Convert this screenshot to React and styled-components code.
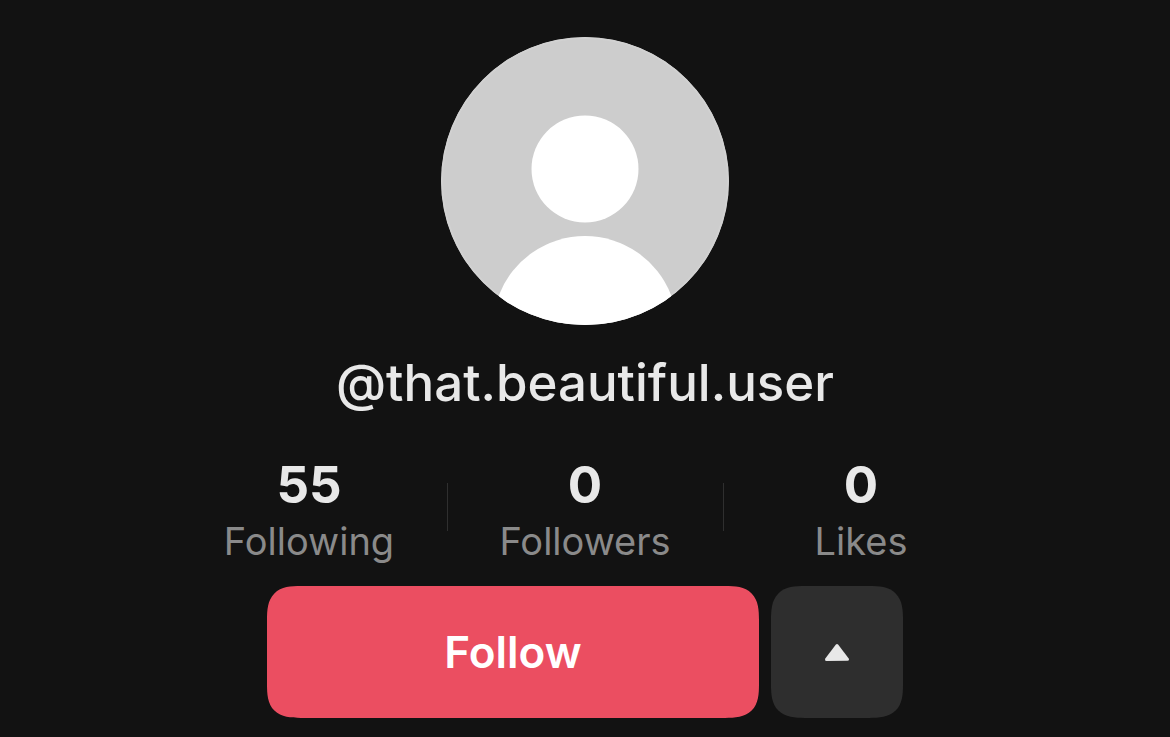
import styled, { createGlobalStyle } from 'styled-components';

const GlobalStyle = createGlobalStyle`
  * {
    box-sizing: border-box;
  }

  body {
    margin: 0;
    background: #121212;
    font-family: Inter, 'Liberation Sans', sans-serif;
  }
`;

const Profile = styled.main`
  display: flex;
  flex-direction: column;
  align-items: center;
  padding: 37px 16px 19px;
`;

const Avatar = styled.svg`
  display: block;
  width: 288px;
  height: 288px;
  border-radius: 50%;
`;

const Handle = styled.h1`
  margin: 26px 0 0;
  font-size: 51px;
  font-weight: 500;
  line-height: 64px;
  color: #e8e8e8;
`;

const Stats = styled.ul`
  display: flex;
  align-items: center;
  margin: 40px 0 0;
  padding: 0;
  list-style: none;
`;

const Stat = styled.li`
  display: flex;
  flex-direction: column;
  align-items: center;
  width: 276px;
  position: relative;

  & + &::before {
    content: '';
    position: absolute;
    left: 0;
    top: 28px;
    width: 1px;
    height: 48px;
    background: #2f2f2f;
  }
`;

const Count = styled.strong`
  font-size: 51px;
  font-weight: 700;
  line-height: 60px;
  color: #e8e8e8;
`;

const Label = styled.span`
  margin-top: 2px;
  font-size: 38px;
  line-height: 48px;
  color: #8a8a8a;
`;

const Actions = styled.div`
  display: flex;
  gap: 12px;
  margin-top: 21px;
`;

const Button = styled.button`
  display: flex;
  align-items: center;
  justify-content: center;
  width: ${props => props.$primary ? '492px' : '132px'};
  height: 132px;
  padding: 0;
  border: none;
  border-radius: 24px;
  background: ${props => props.$primary ? '#eb4e61' : '#2e2e2e'};
  color: #fff;
  font-family: inherit;
  font-size: 44px;
  font-weight: 600;
  cursor: pointer;

  @supports (corner-shape: superellipse(1.5)) {
    border-radius: 34px;
    corner-shape: superellipse(1.5);
  }
`;

const stats = [
  { label: 'Following', count: 55 },
  { label: 'Followers', count: 0 },
  { label: 'Likes', count: 0 },
];

function App() {
  return (
    <>
      <GlobalStyle />
      <Profile>
        <Avatar viewBox="0 0 288 288" role="img" aria-label="Profile photo">
          <rect width="288" height="288" fill="#cdcdcd" />
          <circle cx="144" cy="144" r="143" fill="none" stroke="#d1d1d1" strokeWidth="2" />
          <circle cx="144" cy="132" r="53.5" fill="#fff" />
          <path d="M58 258A92.2 92.2 0 0 1 230 258V288H58Z" fill="#fff" />
        </Avatar>
        <Handle>@that.beautiful.user</Handle>
        <Stats>
          {stats.map(stat => (
            <Stat key={stat.label}>
              <Count>{stat.count}</Count>
              <Label>{stat.label}</Label>
            </Stat>
          ))}
        </Stats>
        <Actions>
          <Button type="button" $primary>Follow</Button>
          <Button type="button" aria-label="Show suggested accounts">
            <svg width="26" height="18" viewBox="0 0 26 18" fill="#e8e8e8">
              <path d="M11.7 1.7Q13 .3 14.3 1.7L24.5 15.2Q25.8 17.4 23.6 17.7L2.5 18Q.2 17.9 1.5 15.2Z" />
            </svg>
          </Button>
        </Actions>
      </Profile>
    </>
  );
}

export default App;
